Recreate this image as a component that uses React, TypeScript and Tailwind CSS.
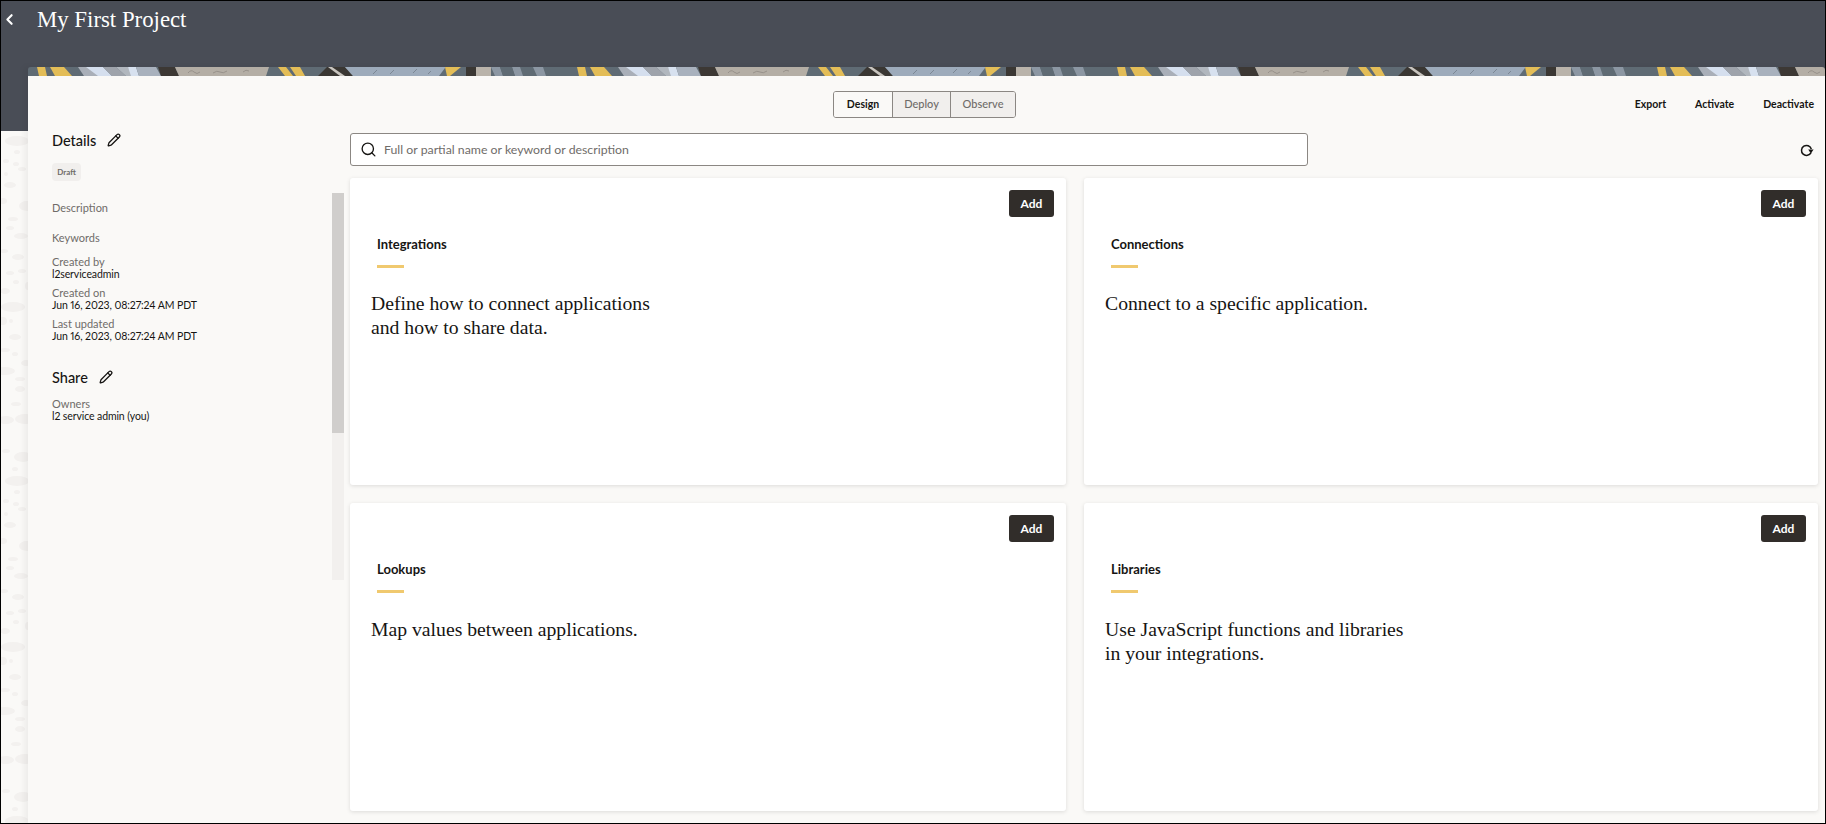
import React from "react";
import { ChevronLeft, Pencil, Search } from "lucide-react";

const sans = "font-['Lato',sans-serif]";
const serif = "font-['Liberation_Serif',serif]";

const BLOBS = [
  [16, 10, 12, 5], [16, 21, 3, 2], [5, 30, 3, 2], [15, 33, 3, 2], [21, 38, 4, 2], [5, 43, 2, 2],
  [9, 54, 6, 3], [2, 70, 4, 3], [26, 75, 8, 5], [12, 88, 5, 2], [9, 97, 4, 2], [20, 105, 7, 3],
  [3, 120, 4, 2], [17, 126, 6, 3], [9, 142, 4, 2], [21, 140, 4, 2], [15, 151, 3, 2], [27, 155, 3, 4],
  [4, 160, 5, 3], [12, 176, 12, 5], [2, 190, 4, 4], [10, 190, 2, 2], [14, 206, 6, 3], [4, 219, 5, 2],
  [14, 223, 3, 2], [25, 232, 5, 3], [4, 240, 10, 4], [19, 248, 5, 2], [19, 258, 5, 3], [15, 273, 5, 2],
  [24, 288, 10, 5], [5, 289, 8, 4], [5, 320, 4, 2], [22, 326, 9, 5], [14, 338, 3, 2],
];

// decorative strip across the top of the panel, repeats every 540px
const BannerStrip = () => (
  <svg className="block h-[9px] w-full rounded-t-[3px]" aria-hidden="true">
    <defs>
      <pattern id="strip" width="540" height="9" patternUnits="userSpaceOnUse">
        <rect width="540" height="9" fill="#5f6b74" />
        <path d="M9 0h8l2 9h-8z" fill="#e3bd57" />
        <path d="M22 0h14l8 9H27z" fill="#e3bd57" />
        <path d="M50 0h14l8 9H56z" fill="#a9afb8" />
        <path d="M58 0h17l9 9H70z" fill="#d5dfee" />
        <path d="M75 0h13l10 9H84z" fill="#9ea3ab" />
        <path d="M88 0h12l6 9H98z" fill="#b1b7be" />
        <path d="M100 0h8l3 9h-8z" fill="#d7e1ef" />
        <path d="M108 0h20l5 9h-22z" fill="#a8b1bd" />
        <path d="M130 0h17l4 9h-18z" fill="#3c3834" />
        <path d="M147 0h94l-3 9h-87z" fill="#b4aea5" />
        <path d="M160 6q3-4 6-1t6 0M185 6q4-3 7-1t7-1M215 5q3-3 6-1" stroke="#97918a" strokeWidth="1" fill="none" />
        <path d="M250 0h8l7 9h-8zM262 0h10l5 9h-9z" fill="#e3bd57" />
        <path d="M290 9l9-9h18l8 9z" fill="#3a3733" />
        <path d="M300 0h4l13 9h-5z" fill="#c9c5bf" />
        <path d="M317 0h100v1l-6 8h-86z" fill="#9dabbb" />
        <path d="M345 7l4-4M362 7l4-4M385 6l4-4M400 7l3-3" stroke="#7b8794" strokeWidth="1" />
        <path d="M417 0h16l-11 9h-3z" fill="#e3bd57" />
        <path d="M438 0h10v9h-10z" fill="#3a3733" />
        <path d="M448 0h15v9h-15z" fill="#b9b3aa" />
        <path d="M463 0h9l3 9h-8zM484 0h8l3 9h-8zM505 0h10l3 9h-9z" fill="#8c97a3" />
        <path d="M472 0h12l3 9h-12z" fill="#5f6b74" />
      </pattern>
    </defs>
    <rect width="100%" height="9" fill="url(#strip)" />
  </svg>
);

const RefreshIcon = () => (
  <svg className="mt-[2px]" width="14" height="13" viewBox="0 0 14 13" fill="none" aria-hidden="true">
    <path d="M11.3 5A5 5 0 1 0 11 8.6" stroke="#161513" strokeWidth="1.5" />
    <path d="M8.2 5.6h5.4L10.9 9.4z" fill="#161513" />
  </svg>
);

const Field = ({ label, value, className }: { label: string; value: string; className?: string }) => (
  <div className={className}>
    <div className="text-[11px] leading-[13px] text-[#6f6c69]">{label}</div>
    <div className="text-[10.5px] leading-[13px] tracking-[-0.1px] text-[#161513] [font-variant-numeric:proportional-nums]">
      {value}
    </div>
  </div>
);

const Card = ({ title, lines, descTop }: { title: string; lines: string[]; descTop: string }) => (
  <div className="flex flex-col rounded-[3px] bg-white shadow-[0_1px_4px_rgba(0,0,0,0.12)]">
    <div className="flex justify-end pt-3 pr-3">
      <button
        type="button"
        className="h-[27px] w-[45px] rounded-[3px] bg-[#312d2a] text-[12px] font-bold text-white"
      >
        Add
      </button>
    </div>
    <div className="mt-[19px] pl-[27px] text-[13px] leading-[16px] font-bold text-[#161513]">{title}</div>
    <div className="mt-[13px] ml-[27px] h-[3px] w-[27px] bg-[#f0c96f]" />
    <div className={`${serif} ${descTop} pl-[21px] text-[19.7px] leading-[24px] text-[#161513]`}>
      {lines.map((l) => (
        <div key={l}>{l}</div>
      ))}
    </div>
  </div>
);

export default function App() {
  return (
    <div className={`${sans} relative h-[824px] w-full overflow-hidden border border-black bg-[#faf9f7]`}>
      <svg className="absolute top-[130px] left-0 h-[693px] w-[27px]" aria-hidden="true">
        <defs>
          <pattern id="blobs" width="30" height="340" patternUnits="userSpaceOnUse">
            {BLOBS.map(([x, y, rx, ry], i) => (
              <ellipse key={i} cx={x} cy={y} rx={rx} ry={ry} fill="#f3f1ef" />
            ))}
          </pattern>
        </defs>
        <rect width="100%" height="100%" fill="url(#blobs)" />
      </svg>

      <header className="relative flex h-[130px] items-start bg-[#494d56] pt-[7px] text-white">
        <ChevronLeft size={17} strokeWidth={3} className="mt-[3px]" />
        <h1 className={`${serif} ml-[19px] text-[22.8px] leading-[24px]`}>My First Project</h1>
      </header>

      <div className="relative mt-[-64px] ml-[27px] shadow-[-4px_0_6px_rgba(0,0,0,0.05)]">
        <BannerStrip />
        <div className="flex h-[747px] bg-[#faf9f7]">
          <aside className="flex w-[322px] shrink-0">
            <div className="w-[304px] pt-[55px] pl-[24px]">
              <div className="flex h-[20px] items-center gap-[11px]">
                <h2 className="text-[14.5px] leading-[20px] font-medium text-[#161513]">Details</h2>
                <Pencil size={14} strokeWidth={2.2} className="mt-[-3px] text-[#161513]" />
              </div>
              <div className="mt-[12px] flex h-[18px] w-[29px] items-center justify-center rounded-[4px] bg-[#f1efed] text-[8px] font-bold text-[#6f6c69]">
                Draft
              </div>
              <div className="mt-[20px] text-[11px] leading-[14px] text-[#6f6c69]">Description</div>
              <div className="mt-[16px] text-[11px] leading-[14px] text-[#6f6c69]">Keywords</div>
              <Field className="mt-[10px]" label="Created by" value="l2serviceadmin" />
              <Field className="mt-[5px]" label="Created on" value="Jun 16, 2023, 08:27:24 AM PDT" />
              <Field className="mt-[5px]" label="Last updated" value="Jun 16, 2023, 08:27:24 AM PDT" />
              <div className="mt-[25px] flex h-[20px] items-center gap-[11px]">
                <h2 className="text-[14.5px] leading-[20px] font-medium text-[#161513]">Share</h2>
                <Pencil size={14} strokeWidth={2.2} className="mt-[-3px] text-[#161513]" />
              </div>
              <Field className="mt-[9px]" label="Owners" value="l2 service admin (you)" />
            </div>
            <div className="mt-[117px] h-[387px] w-[12px] bg-[#f2f0ee]">
              <div className="h-[240px] bg-[#d0cecc]" />
            </div>
          </aside>

          <main className="flex min-w-0 flex-1 flex-col">
            <div className="flex h-[57px] items-center justify-between pr-[11px] pl-[483px]">
              <div className="flex h-[27px] w-[183px] overflow-hidden rounded-[3px] border border-[#8b8783] text-[11px]">
                <span className="flex w-[58px] items-center justify-center bg-[#faf9f7] text-[10.5px] font-bold text-[#161513]">
                  Design
                </span>
                <span className="flex w-[58px] items-center justify-center border-l border-[#8b8783] bg-[#f1efed] font-medium text-[#6f6c69]">
                  Deploy
                </span>
                <span className="flex flex-1 items-center justify-center border-l border-[#8b8783] bg-[#f1efed] font-medium text-[#6f6c69]">
                  Observe
                </span>
              </div>
              <div className="flex gap-[29px] text-[10.5px] font-bold text-[#161513]">
                <span>Export</span>
                <span>Activate</span>
                <span>Deactivate</span>
              </div>
            </div>
            <div className="flex h-[33px] items-center justify-between pr-[11px]">
              <div className="flex h-[33px] w-[958px] items-center gap-[8px] rounded-[3px] border border-[#8b8783] bg-white pl-[9px]">
                <Search size={17} strokeWidth={1.9} className="text-[#161513]" />
                <span className="mt-[2px] ml-[-1px] text-[12.3px] text-[#6f6c69]">
                  Full or partial name or keyword or description
                </span>
              </div>
              <RefreshIcon />
            </div>
            <div className="mt-[12px] grid grid-cols-[716px_734px] grid-rows-[307px_308px] gap-[18px]">
              <Card
                title="Integrations"
                descTop="mt-[23px]"
                lines={["Define how to connect applications", "and how to share data."]}
              />
              <Card title="Connections" descTop="mt-[23px]" lines={["Connect to a specific application."]} />
              <Card title="Lookups" descTop="mt-[24px]" lines={["Map values between applications."]} />
              <Card
                title="Libraries"
                descTop="mt-[24px]"
                lines={["Use JavaScript functions and libraries", "in your integrations."]}
              />
            </div>
          </main>
        </div>
      </div>
    </div>
  );
}
